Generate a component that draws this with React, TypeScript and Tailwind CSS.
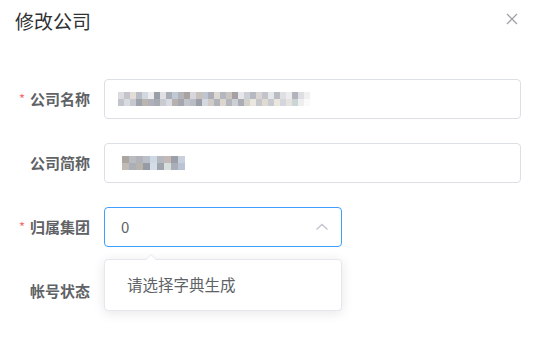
import React from "react";

const m1top = [
  "#dcdce0", "#c4c4ca", "#e2ddd6", "#b9bcc4", "#d2d8df", "#ececee", "#9a9ea6", "#e0e0e4",
  "#a9adb6", "#c0c9d3", "#b2b4ba", "#a8a2a0", "#d6d6dc", "#c8c0bb", "#bfc6d0", "#acafb8",
  "#dcd9d4", "#b4b7be", "#cbc5c2", "#a4a0a3", "#e6e6ea", "#ccd0d6", "#b6b9c0", "#d8d5d2",
  "#c2c4ca", "#e4e6ea", "#babcc3", "#e0e0e4", "#ececef", "#b2b4bb", "#dedee3", "#f0f0f2",
];
const m1bot = [
  "#c1c4ca", "#d8dbe0", "#c5c8cf", "#9ea2aa", "#bbb5b0", "#afb2ba", "#a7aab2", "#c9cbd1",
  "#d8dbe1", "#b6b1ae", "#a4a7ae", "#c2c4cb", "#b9bcc3", "#9a9ea8", "#d5d8de", "#d0cbc6",
  "#b0b3ba", "#dcd6cd", "#b3b6bd", "#cccfd4", "#aaadb5", "#d4d0ca", "#eae7e1", "#c5c7cc",
  "#e0dad1", "#c7cad0", "#ece7dc", "#d3d6dc", "#e4e3de", "#cbd5d6", "#eeeeee", "#fafafa",
];
const m2top = ["#aaa59f", "#b8bbc0", "#b0b4ba", "#bbc0c8", "#ccd8e3", "#b5b8be", "#c3bab7", "#9a9fa8", "#c8d0dd"];
const m2bot = ["#c1bbb6", "#aaafb8", "#b8b4ad", "#969ba5", "#d3dde8", "#a0a5ad", "#d7dfdc", "#a9aeb8", "#bac4d4"];

function Mosaic({ rows, bw, bh }: { rows: string[][]; bw: number; bh: number }) {
  return (
    <div className="flex flex-col">
      {rows.map((r, i) => (
        <div key={i} className="flex">
          {r.map((c, j) => (
            <div key={j} style={{ width: bw, height: bh, background: c }} />
          ))}
        </div>
      ))}
    </div>
  );
}

function Label({ text, required }: { text: string; required?: boolean }) {
  return (
    <div className="w-[104px] shrink-0 flex items-center justify-end pr-[14px] text-[15px] font-bold text-[#606266]">
      {required && <span className="text-[#f56c6c] text-[13px] mr-[5px] font-normal">*</span>}
      <span>{text}</span>
    </div>
  );
}

export default function App() {
  return (
    <div
      className="w-[555px] h-[363px] bg-white relative overflow-hidden"
      style={{ fontFamily: '"Noto Sans CJK SC", "Noto Sans", sans-serif' }}
    >
      <div className="flex items-start justify-between pl-[15px] pr-[37px] pt-[8px]">
        <div className="text-[19px] leading-[26px] text-[#303133]">修改公司</div>
        <svg width="12" height="12" viewBox="0 0 12 12" className="mt-[5px]">
          <path d="M1 1 L11 11 M11 1 L1 11" stroke="#a0a3aa" strokeWidth="1.3" fill="none" />
        </svg>
      </div>

      <div className="flex flex-col gap-[24px] mt-[45px]">
        <div className="flex items-center">
          <Label text="公司名称" required />
          <div className="w-[417px] h-[40px] border border-[#dcdfe6] rounded-[4px] flex items-center pl-[13px]">
            <Mosaic rows={[m1top, m1bot]} bw={6} bh={7} />
          </div>
        </div>

        <div className="flex items-center">
          <Label text="公司简称" />
          <div className="w-[417px] h-[40px] border border-[#dcdfe6] rounded-[4px] flex items-center pl-[17px]">
            <Mosaic rows={[m2top, m2bot]} bw={7} bh={7} />
          </div>
        </div>

        <div className="flex items-center">
          <Label text="归属集团" required />
          <div className="relative">
            <div className="w-[238px] h-[40px] border border-[#409eff] rounded-[4px] flex items-center justify-between pl-[16px] pr-[12px]">
              <span className="text-[15px] text-[#606266]">0</span>
              <svg width="14" height="10" viewBox="0 0 14 10">
                <path d="M1.5 7.5 L7 2.5 L12.5 7.5" stroke="#c0c4cc" strokeWidth="1.3" fill="none" />
              </svg>
            </div>
            <div className="absolute left-0 top-[52px] w-[238px] h-[52px] bg-white border border-[#e4e7ed] rounded-[4px] shadow-[0_2px_12px_rgba(0,0,0,0.1)] flex items-center pl-[22px] z-10">
              <div className="absolute -top-[6px] left-[40px] w-0 h-0 border-l-[6px] border-r-[6px] border-b-[6px] border-l-transparent border-r-transparent border-b-[#e4e7ed]" />
              <div className="absolute -top-[5px] left-[41px] w-0 h-0 border-l-[5px] border-r-[5px] border-b-[5px] border-l-transparent border-r-transparent border-b-white" />
              <span className="text-[15.5px] text-[#606266]">请选择字典生成</span>
            </div>
          </div>
        </div>

        <div className="flex items-center h-[40px]">
          <Label text="帐号状态" />
        </div>
      </div>
    </div>
  );
}
